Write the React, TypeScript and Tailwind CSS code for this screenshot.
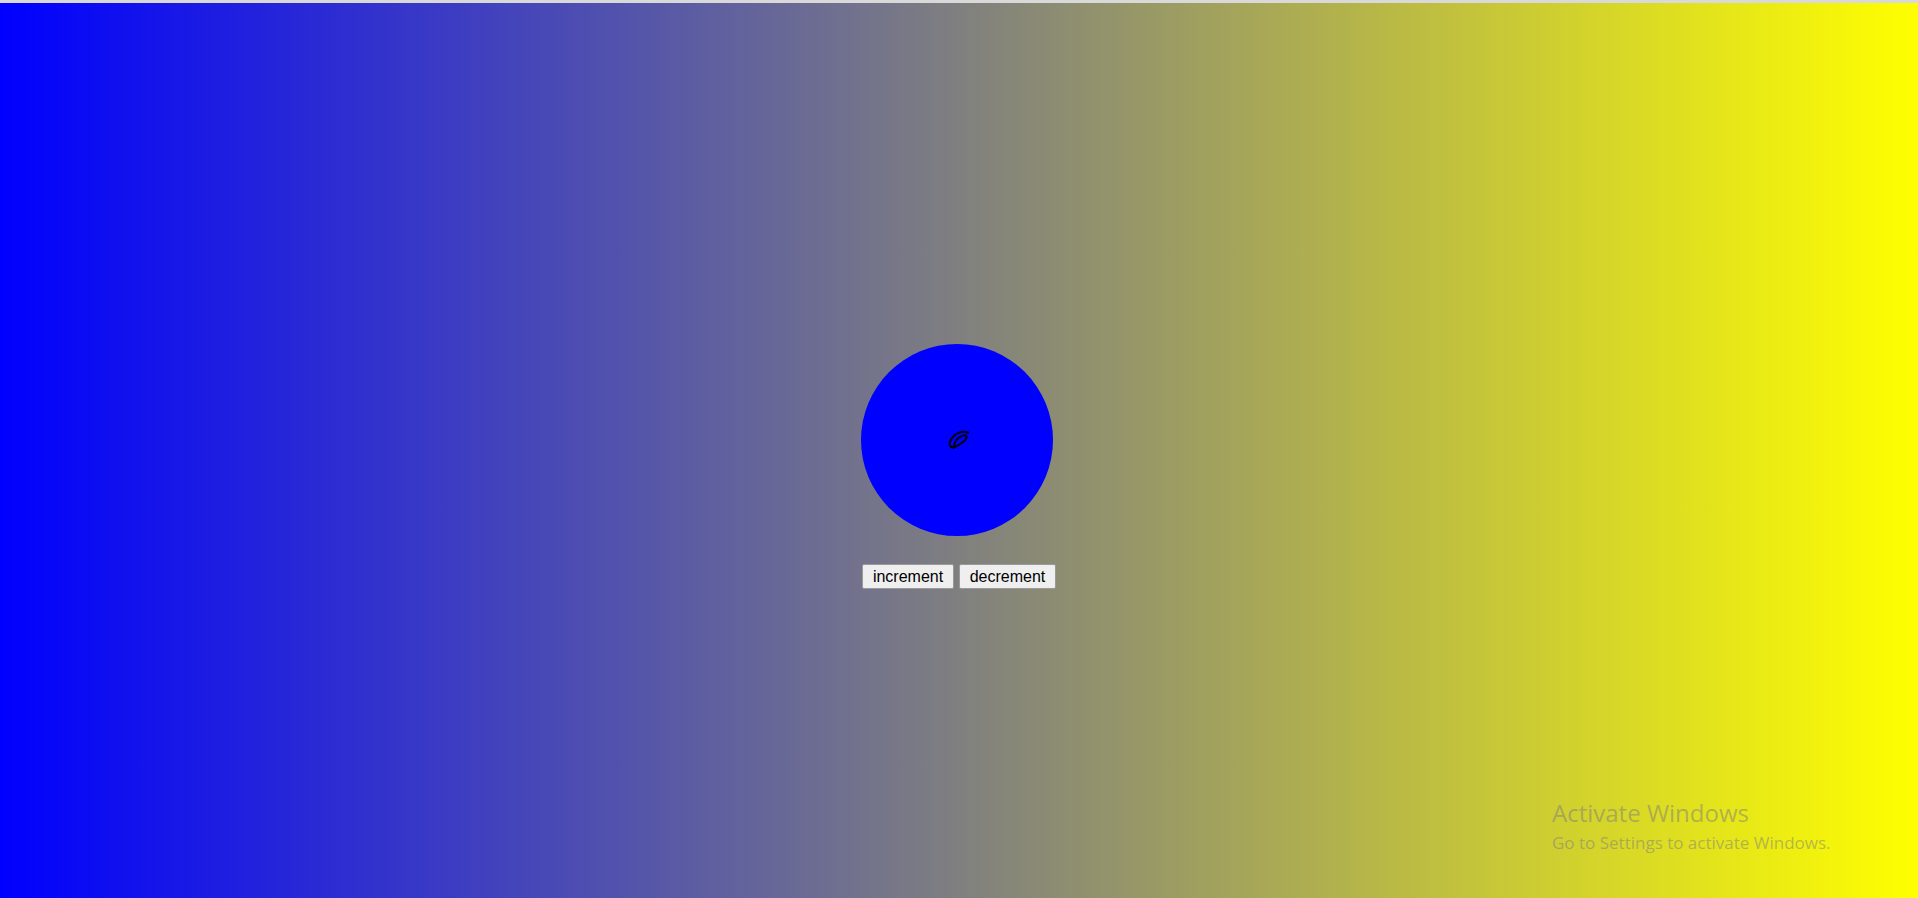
import React, { useState } from 'react';

function Loop() {
  return (
    <svg width="24" height="20" viewBox="0 0 24 20" fill="none" stroke="#000" strokeWidth="2" strokeLinecap="round">
      <path d="M21 2.5 C14.5 0.5 7 3.5 3.5 10.5 C1.5 15 3.5 18.5 7.5 17 C13 15 20 10 19.5 6.5 C19 3.5 13 6 9.5 10 C7.5 12.5 6.5 15.5 7 18" />
    </svg>
  );
}

export default function App() {
  const [count, setCount] = useState(0);

  return (
    <div className="w-full h-[898px] overflow-hidden flex flex-col" style={{ fontFamily: '"Liberation Sans", Arial, sans-serif' }}>
      <div className="h-[3px] bg-[#d9d9d9]" />
      <div className="relative flex-1 bg-[linear-gradient(to_right,#0000ff,#ffff00)] flex flex-col items-center pt-[341px]">
        {/* ball */}
        <div
          className="w-[192px] h-[192px] rounded-full bg-[#0000ff] flex items-center justify-center mr-[4px]"
          data-count={count}
        >
          <div className="ml-[3px]">
            <Loop />
          </div>
        </div>

        <div className="mt-[28px] flex gap-[5px]">
          <button
            onClick={() => setCount(count + 1)}
            className="w-[92px] h-[25px] bg-[#efefef] border border-[#9a9a9a] rounded-[2px] text-[16px] text-black leading-none"
          >
            increment
          </button>
          <button
            onClick={() => setCount(count - 1)}
            className="w-[97px] h-[25px] bg-[#efefef] border border-[#9a9a9a] rounded-[2px] text-[16px] text-black leading-none"
          >
            decrement
          </button>
        </div>

        {/* windows watermark */}
        <div
          className="absolute left-[1552px] top-[795px] text-[rgba(125,125,125,0.5)] whitespace-nowrap"
          style={{ fontFamily: '"Open Sans", "Noto Sans", sans-serif' }}
        >
          <div className="text-[24px] leading-[30px]">Activate Windows</div>
          <div className="text-[17px] leading-[22px] mt-[4px]">Go to Settings to activate Windows.</div>
        </div>
      </div>
    </div>
  );
}
